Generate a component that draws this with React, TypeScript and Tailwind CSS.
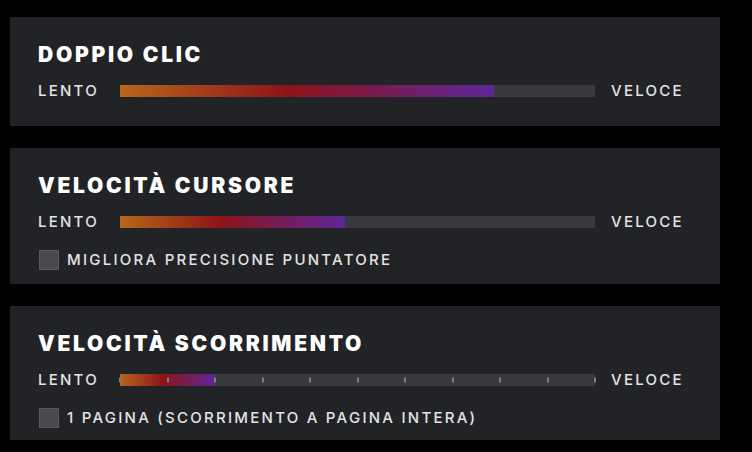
import React from "react";

const fill =
  "h-full bg-[linear-gradient(90deg,#b8661a_0%,#8c1418_45%,#5d2699_100%)]";

const label = "text-[15px] leading-5 font-medium tracking-[0.15em] text-[#e4e4e4]";
const heading = "text-[21px] leading-6 font-black tracking-[0.13em] text-white";

function Slider({ pct, ticks = false }: { pct: number; ticks?: boolean }) {
  return (
    <div className="flex items-center">
      <span className={`w-[82px] ${label}`}>LENTO</span>
      <div className="relative h-3 w-[475px] bg-[#38393d]">
        <div className={fill} style={{ width: `${pct}%` }} />
        {ticks &&
          Array.from({ length: 11 }).map((_, i) => (
            <span
              key={i}
              className="absolute top-1/2 h-[5px] w-[2px] -translate-x-1/2 -translate-y-1/2 bg-[#7c7c80]"
              style={{ left: `${i * 10}%` }}
            />
          ))}
      </div>
      <span className={`ml-4 ${label}`}>VELOCE</span>
    </div>
  );
}

function Check({ text }: { text: string }) {
  return (
    <div className="flex items-center gap-2">
      <span className="ml-px h-5 w-5 border border-[#5a5a5e] bg-[#4a4a4e]" />
      <span className={label}>{text}</span>
    </div>
  );
}

function Panel({
  title,
  children,
  className = "pb-[14px]",
}: {
  title: string;
  children: React.ReactNode;
  className?: string;
}) {
  return (
    <div className={`w-[710px] bg-[#222327] px-7 pt-[26px] ${className}`}>
      <h2 className={heading}>{title}</h2>
      <div className="mt-[14px] flex flex-col gap-[18px]">{children}</div>
    </div>
  );
}

export default function App() {
  return (
    <div
      className="flex h-[452px] w-[752px] flex-col gap-[22px] bg-[#020202] pt-[17px] pl-[10px]"
      style={{ fontFamily: "Inter, 'Noto Sans', sans-serif" }}
    >
      <div className="w-[710px] bg-[#222327] px-7 pt-[26px] pb-[25px]">
        <h2 className={heading}>DOPPIO CLIC</h2>
        <div className="mt-[14px]">
          <Slider pct={78.7} />
        </div>
      </div>
      <Panel title="VELOCITÀ CURSORE">
        <Slider pct={47.4} />
        <Check text="MIGLIORA PRECISIONE PUNTATORE" />
      </Panel>
      <Panel title="VELOCITÀ SCORRIMENTO" className="pb-3">
        <Slider pct={20} ticks />
        <Check text="1 PAGINA (SCORRIMENTO A PAGINA INTERA)" />
      </Panel>
    </div>
  );
}
